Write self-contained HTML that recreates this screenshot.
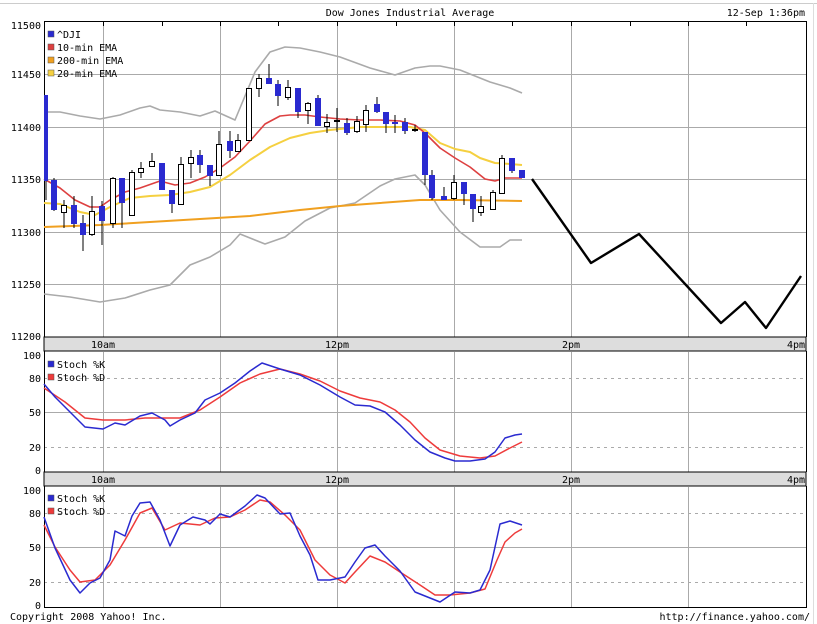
<!DOCTYPE html>
<html><head><meta charset="utf-8"><style>
html,body{margin:0;padding:0;background:#fff;width:817px;height:624px;overflow:hidden}
svg text{font-family:"DejaVu Sans Mono","Liberation Mono",monospace;font-size:10px;fill:#000}
</style></head><body>
<svg width="817" height="624" viewBox="0 0 817 624" xmlns="http://www.w3.org/2000/svg">
<rect x="0" y="0" width="817" height="624" fill="#fff"/>
<line x1="0" y1="3.5" x2="817" y2="3.5" stroke="#ccc"/>
<line x1="813.5" y1="3" x2="813.5" y2="624" stroke="#ddd"/>
<text x="410" y="16" text-anchor="middle">Dow Jones Industrial Average</text>
<text x="805" y="16" text-anchor="end">12-Sep 1:36pm</text>

<!-- grid main -->
<g stroke="#aaa" stroke-width="1">
<line x1="103.5" y1="22" x2="103.5" y2="337"/><line x1="220.5" y1="22" x2="220.5" y2="337"/><line x1="337.5" y1="22" x2="337.5" y2="337"/><line x1="454.5" y1="22" x2="454.5" y2="337"/><line x1="571.5" y1="22" x2="571.5" y2="337"/><line x1="688.5" y1="22" x2="688.5" y2="337"/>
<line x1="44" y1="74.5" x2="806" y2="74.5"/><line x1="44" y1="127.5" x2="806" y2="127.5"/><line x1="44" y1="179.5" x2="806" y2="179.5"/><line x1="44" y1="232.5" x2="806" y2="232.5"/><line x1="44" y1="284.5" x2="806" y2="284.5"/>
<!-- panel 2 -->
<line x1="103.5" y1="352" x2="103.5" y2="472"/><line x1="220.5" y1="352" x2="220.5" y2="472"/><line x1="337.5" y1="352" x2="337.5" y2="472"/><line x1="454.5" y1="352" x2="454.5" y2="472"/><line x1="571.5" y1="352" x2="571.5" y2="472"/><line x1="688.5" y1="352" x2="688.5" y2="472"/>
<line x1="44" y1="412.5" x2="806" y2="412.5"/>
<!-- panel 3 -->
<line x1="103.5" y1="487" x2="103.5" y2="607"/><line x1="220.5" y1="487" x2="220.5" y2="607"/><line x1="337.5" y1="487" x2="337.5" y2="607"/><line x1="454.5" y1="487" x2="454.5" y2="607"/><line x1="571.5" y1="487" x2="571.5" y2="607"/><line x1="688.5" y1="487" x2="688.5" y2="607"/>
<line x1="44" y1="547.5" x2="806" y2="547.5"/>
</g>
<g stroke="#aaa" stroke-dasharray="3,4">
<line x1="44" y1="378.5" x2="806" y2="378.5"/><line x1="44" y1="447.5" x2="806" y2="447.5"/>
<line x1="44" y1="513.5" x2="806" y2="513.5"/><line x1="44" y1="582.5" x2="806" y2="582.5"/>
</g>

<!-- axis bars -->
<rect x="44" y="337" width="762" height="14" fill="#ddd" stroke="#000"/>
<rect x="44" y="472" width="762" height="14" fill="#ddd" stroke="#000"/>
<text x="103" y="348" text-anchor="middle">10am</text><text x="337" y="348" text-anchor="middle">12pm</text><text x="571" y="348" text-anchor="middle">2pm</text><text x="805" y="348" text-anchor="end">4pm</text>
<text x="103" y="483" text-anchor="middle">10am</text><text x="337" y="483" text-anchor="middle">12pm</text><text x="571" y="483" text-anchor="middle">2pm</text><text x="805" y="483" text-anchor="end">4pm</text>

<!-- frames -->
<g fill="none" stroke="#000">
<line x1="44.5" y1="21" x2="44.5" y2="337"/><line x1="806.5" y1="21" x2="806.5" y2="337"/><line x1="44" y1="21.5" x2="807" y2="21.5"/>
<line x1="44.5" y1="351" x2="44.5" y2="472"/><line x1="806.5" y1="351" x2="806.5" y2="472"/>
<line x1="44.5" y1="486" x2="44.5" y2="607"/><line x1="806.5" y1="486" x2="806.5" y2="607"/><line x1="44" y1="607.5" x2="807" y2="607.5"/>
</g>
<g stroke="#000">
<line x1="162.5" y1="22" x2="162.5" y2="26"/><line x1="278.5" y1="22" x2="278.5" y2="26"/><line x1="396.5" y1="22" x2="396.5" y2="26"/><line x1="512.5" y1="22" x2="512.5" y2="26"/><line x1="630.5" y1="22" x2="630.5" y2="26"/><line x1="746.5" y1="22" x2="746.5" y2="26"/>
<line x1="103.5" y1="22" x2="103.5" y2="26"/><line x1="220.5" y1="22" x2="220.5" y2="26"/><line x1="337.5" y1="22" x2="337.5" y2="26"/><line x1="454.5" y1="22" x2="454.5" y2="26"/><line x1="571.5" y1="22" x2="571.5" y2="26"/><line x1="688.5" y1="22" x2="688.5" y2="26"/>
</g>

<!-- y labels -->
<g text-anchor="end">
<text x="41" y="29">11500</text><text x="41" y="78">11450</text><text x="41" y="131">11400</text><text x="41" y="183">11350</text><text x="41" y="236">11300</text><text x="41" y="288">11250</text><text x="41" y="340">11200</text>
<text x="41" y="359">100</text><text x="41" y="382">80</text><text x="41" y="416">50</text><text x="41" y="451">20</text><text x="41" y="474">0</text>
<text x="41" y="494">100</text><text x="41" y="517">80</text><text x="41" y="551">50</text><text x="41" y="586">20</text><text x="41" y="609">0</text>
</g>

<!-- overlay lines -->
<g fill="none" stroke-width="1.6" stroke-linejoin="round">
<polyline stroke="#aaa" points="44,112 60,112 80,116 100,119 120,115 140,108 150,106 160,110 180,112 200,116 215,111 235,120 255,72 270,52 285,47 300,48 320,52 340,57 370,68 395,75 415,68 430,66 440,66 460,70 490,82 510,88 522,93"/>
<polyline stroke="#aaa" points="44,294 70,297 100,302 125,298 150,290 170,285 190,265 210,257 230,245 240,234 265,244 285,237 305,221 330,208 355,203 380,186 395,179 415,175 425,185 440,210 460,232 480,247 500,247 510,240 522,240"/>
<polyline stroke="#f0a020" stroke-width="2" points="44,227 100,225 150,222 200,219 250,216 300,210 340,206 380,203 420,200 460,200 522,201"/>
<polyline stroke="#f5d040" stroke-width="2" points="44,203 60,204 80,212 95,215 110,207 130,198 150,196 170,195 190,192 210,187 230,175 250,160 270,147 290,138 310,133 330,130 360,127 390,127 410,127 425,130 440,143 455,149 470,152 480,158 495,163 510,164 522,165"/>
<polyline stroke="#dd4040" points="44,179 60,188 75,200 90,207 100,207 110,200 125,192 140,188 160,181 175,185 190,183 205,177 220,168 235,157 250,141 265,124 280,116 290,115 305,115 320,117 340,119 360,120 380,120 400,121 415,125 425,133 440,148 455,158 470,167 485,179 495,181 505,178 522,178"/>
<polyline stroke="#000" stroke-width="2.4" points="532,179 591,263 639,234 721,323 745,302 766,328 801,276"/>
</g>

<!-- candles -->
<g stroke="#000" stroke-width="1">
<line x1="46" y1="95" x2="46" y2="200"/>
<line x1="54" y1="178" x2="54" y2="211"/><line x1="64" y1="200" x2="64" y2="228"/><line x1="74" y1="196" x2="74" y2="228"/><line x1="83" y1="215" x2="83" y2="251"/><line x1="92" y1="196" x2="92" y2="236"/><line x1="102" y1="201" x2="102" y2="245"/><line x1="113" y1="177" x2="113" y2="228"/><line x1="122" y1="178" x2="122" y2="228"/><line x1="132" y1="170" x2="132" y2="216"/><line x1="141" y1="162" x2="141" y2="178"/><line x1="152" y1="153" x2="152" y2="166"/><line x1="162" y1="163" x2="162" y2="190"/><line x1="172" y1="190" x2="172" y2="213"/><line x1="181" y1="157" x2="181" y2="204"/><line x1="191" y1="150" x2="191" y2="178"/><line x1="200" y1="150" x2="200" y2="173"/><line x1="210" y1="165" x2="210" y2="186"/><line x1="219" y1="131" x2="219" y2="175"/><line x1="230" y1="131" x2="230" y2="158"/><line x1="238" y1="134" x2="238" y2="151"/><line x1="249" y1="88" x2="249" y2="140"/><line x1="259" y1="74" x2="259" y2="97"/><line x1="269" y1="64" x2="269" y2="84"/><line x1="278" y1="80" x2="278" y2="106"/><line x1="288" y1="80" x2="288" y2="100"/><line x1="298" y1="88" x2="298" y2="118"/><line x1="308" y1="102" x2="308" y2="124"/><line x1="318" y1="95" x2="318" y2="126"/><line x1="327" y1="114" x2="327" y2="133"/><line x1="337" y1="108" x2="337" y2="132"/><line x1="347" y1="118" x2="347" y2="135"/><line x1="357" y1="116" x2="357" y2="133"/><line x1="366" y1="105" x2="366" y2="132"/><line x1="377" y1="97" x2="377" y2="113"/><line x1="386" y1="112" x2="386" y2="133"/><line x1="395" y1="115" x2="395" y2="133"/><line x1="405" y1="118" x2="405" y2="134"/><line x1="415" y1="125" x2="415" y2="132"/><line x1="425" y1="132" x2="425" y2="185"/><line x1="432" y1="170" x2="432" y2="200"/><line x1="444" y1="187" x2="444" y2="200"/><line x1="454" y1="175" x2="454" y2="200"/><line x1="464" y1="182" x2="464" y2="205"/><line x1="473" y1="194" x2="473" y2="222"/><line x1="481" y1="196" x2="481" y2="216"/><line x1="493" y1="190" x2="493" y2="209"/><line x1="502" y1="155" x2="502" y2="194"/><line x1="512" y1="158" x2="512" y2="173"/><line x1="522" y1="170" x2="522" y2="178"/>
</g>
<g fill="#2a2ad0" stroke="none">
<rect x="44" y="95" width="4" height="86"/>
<rect x="51" y="180" width="6" height="30"/><rect x="71" y="205" width="6" height="19"/><rect x="80" y="223" width="6" height="12"/><rect x="99" y="206" width="6" height="15"/><rect x="119" y="178" width="6" height="25"/><rect x="159" y="163" width="6" height="27"/><rect x="169" y="190" width="6" height="14"/><rect x="197" y="155" width="6" height="10"/><rect x="207" y="165" width="6" height="11"/><rect x="227" y="141" width="6" height="10"/><rect x="266" y="78" width="6" height="6"/><rect x="275" y="84" width="6" height="12"/><rect x="295" y="88" width="6" height="24"/><rect x="315" y="98" width="6" height="28"/><rect x="344" y="123" width="6" height="10"/><rect x="374" y="104" width="6" height="8"/><rect x="383" y="112" width="6" height="12"/><rect x="392" y="122" width="6" height="2"/><rect x="402" y="122" width="6" height="9"/><rect x="422" y="132" width="6" height="43"/><rect x="429" y="175" width="6" height="23"/><rect x="441" y="196" width="6" height="4"/><rect x="461" y="182" width="6" height="12"/><rect x="470" y="194" width="6" height="15"/><rect x="509" y="158" width="6" height="13"/><rect x="519" y="170" width="6" height="8"/>
</g>
<g fill="#fff" stroke="#000">
<rect x="61.5" y="205.5" width="5" height="7"/><rect x="89.5" y="211.5" width="5" height="23"/><rect x="110.5" y="178.5" width="5" height="45"/><rect x="129.5" y="172.5" width="5" height="43"/><rect x="138.5" y="168.5" width="5" height="4"/><rect x="149.5" y="161.5" width="5" height="5"/><rect x="178.5" y="164.5" width="5" height="40"/><rect x="188.5" y="157.5" width="5" height="6"/><rect x="216.5" y="144.5" width="5" height="31"/><rect x="235.5" y="140.5" width="5" height="11"/><rect x="246.5" y="88.5" width="5" height="52"/><rect x="256.5" y="78.5" width="5" height="10"/><rect x="285.5" y="87.5" width="5" height="10"/><rect x="305.5" y="103.5" width="5" height="7"/><rect x="324.5" y="122.5" width="5" height="4"/><rect x="334.5" y="120.5" width="5" height="1"/><rect x="354.5" y="121.5" width="5" height="10"/><rect x="363.5" y="110.5" width="5" height="14"/><rect x="412.5" y="129.5" width="5" height="1"/><rect x="451.5" y="182.5" width="5" height="16"/><rect x="478.5" y="206.5" width="5" height="6"/><rect x="490.5" y="192.5" width="5" height="17"/><rect x="499.5" y="158.5" width="5" height="35"/>
</g>

<!-- stoch panel 2 -->
<g fill="none" stroke-width="1.5" stroke-linejoin="round">
<polyline stroke="#ee3b3b" points="44,388 65,402 85,418 103,420 125,420 145,418 160,418 180,418 200,410 220,397 240,383 260,374 280,369 300,374 320,381 340,391 360,398 380,402 395,410 410,422 425,438 440,450 460,456 480,458 495,456 510,448 522,442"/>
<polyline stroke="#2a2ad0" points="44,384 55,397 70,412 85,427 103,429 115,423 125,425 140,416 152,413 165,420 170,426 180,420 195,413 205,400 220,393 235,383 250,371 262,363 280,369 300,375 320,385 340,397 355,405 370,406 385,412 400,425 415,440 430,452 445,458 455,461 470,461 485,459 495,452 505,438 515,435 522,434"/>
<polyline stroke="#ee3b3b" points="44,525 55,547 70,570 80,582 95,580 110,565 125,540 140,513 152,508 165,530 180,523 200,525 215,518 230,517 245,510 260,500 270,502 285,515 300,530 315,560 330,575 345,583 355,572 370,556 385,562 400,572 420,585 435,595 450,595 470,593 485,589 497,560 505,542 515,533 522,529"/>
<polyline stroke="#2a2ad0" points="44,517 55,548 70,580 80,593 90,583 100,578 110,560 115,531 125,536 132,516 140,503 150,502 160,520 170,546 180,525 193,517 205,520 210,524 220,514 230,517 245,506 257,495 265,498 280,514 290,513 300,536 310,555 318,580 330,580 345,577 355,562 365,548 375,545 385,556 400,571 415,592 430,598 440,602 455,592 470,593 480,590 490,570 500,524 510,521 522,525"/>
</g>

<!-- legends -->
<g stroke="#555" stroke-width="0.5">
<rect x="48" y="31" width="6" height="6" fill="#2a2ad0"/><rect x="48" y="44" width="6" height="6" fill="#dd4040"/><rect x="48" y="57" width="6" height="6" fill="#f0a020"/><rect x="48" y="70" width="6" height="6" fill="#f5d040"/>
<rect x="48" y="361" width="6" height="6" fill="#2a2ad0"/><rect x="48" y="374" width="6" height="6" fill="#ee3b3b"/>
<rect x="48" y="495" width="6" height="6" fill="#2a2ad0"/><rect x="48" y="508" width="6" height="6" fill="#ee3b3b"/>
</g>
<text x="57" y="38">^DJI</text><text x="57" y="51">10-min EMA</text><text x="57" y="64">200-min EMA</text><text x="57" y="77">20-min EMA</text>
<text x="57" y="368">Stoch %K</text><text x="57" y="381">Stoch %D</text>
<text x="57" y="502">Stoch %K</text><text x="57" y="515">Stoch %D</text>

<text x="10" y="620">Copyright 2008 Yahoo! Inc.</text>
<text x="810" y="620" text-anchor="end">http://finance.yahoo.com/</text>
</svg>
</body></html>
